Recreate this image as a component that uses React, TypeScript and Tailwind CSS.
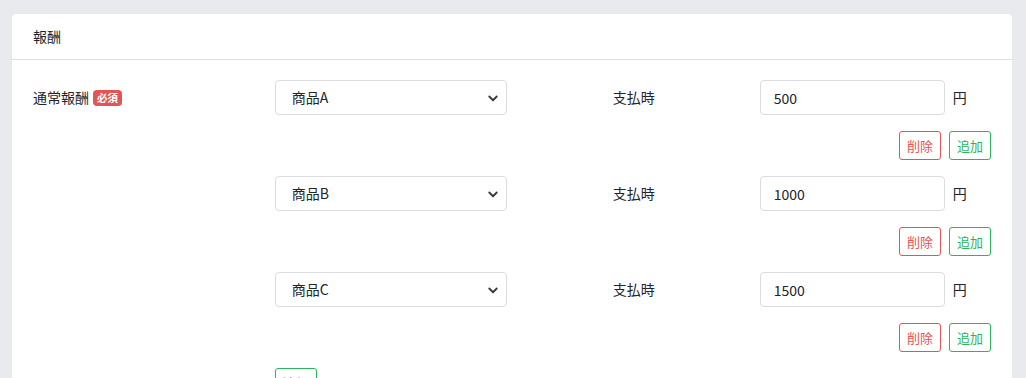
import React from 'react';

const rows = [
  { product: '商品A', amount: '500' },
  { product: '商品B', amount: '1000' },
  { product: '商品C', amount: '1500' },
];

const Chevron: React.FC = () => (
  <svg className="pointer-events-none absolute right-[8px] top-1/2 -translate-y-1/2" width="12" height="12" viewBox="0 0 16 16" fill="none">
    <path d="M3 6l5 5 5-5" stroke="#343a40" strokeWidth="2.4" strokeLinecap="round" strokeLinejoin="round" />
  </svg>
);

export default function App() {
  return (
    <div className="min-h-screen bg-[#e9eaed] px-[12px] pt-[14px] text-[14px] text-[#212529] font-['Noto_Sans_CJK_JP','Noto_Sans',sans-serif]">
      <div className="w-[1000px] rounded-[4px] bg-white shadow-[0_0_1px_rgba(0,0,0,0.08)]">
        {/* header */}
        <div className="flex h-[46px] items-center border-b border-[#dcdde0] px-[21px]">
          <span>報酬</span>
        </div>

        {/* body */}
        <div className="flex px-[21px] pt-[20px] pb-[20px]">
          <div className="flex w-[242px] items-center gap-[4px] self-start pt-[7px]">
            <span>通常報酬</span>
            <span className="rounded-[4px] bg-[#e35454] px-[4px] text-[10.5px] font-bold leading-[16px] text-white">必須</span>
          </div>

          <div className="flex w-[717px] flex-col gap-[16px]">
            {rows.map((row) => (
              <div key={row.product} className="flex flex-col gap-[16px]">
                <div className="flex items-center">
                  <div className="relative w-[232px]">
                    <select
                      defaultValue={row.product}
                      className="h-[35px] w-full appearance-none rounded-[4px] border border-[#dcdde0] bg-white pl-[16px] text-[14px] text-[#212529] outline-none"
                    >
                      <option>商品A</option>
                      <option>商品B</option>
                      <option>商品C</option>
                    </select>
                    <Chevron />
                  </div>
                  <span className="ml-[106px] w-[147px]">支払時</span>
                  <input
                    defaultValue={row.amount}
                    className="h-[35px] w-[185px] rounded-[4px] border border-[#dcdde0] px-[13px] text-[14px] text-[#212529] outline-none"
                  />
                  <span className="ml-[8px]">円</span>
                </div>
                <div className="flex justify-end gap-[8px]">
                  <button className="h-[29px] rounded-[3px] border border-[#e35454] px-[7px] text-[13px] text-[#e35454]">削除</button>
                  <button className="h-[29px] rounded-[3px] border border-[#2db55d] px-[7px] text-[13px] text-[#2db55d]">追加</button>
                </div>
              </div>
            ))}
            <div className="flex">
              <button className="h-[29px] rounded-[3px] border border-[#2db55d] px-[7px] text-[13px] text-[#2db55d]">追加</button>
            </div>
          </div>
        </div>
      </div>
    </div>
  );
}
